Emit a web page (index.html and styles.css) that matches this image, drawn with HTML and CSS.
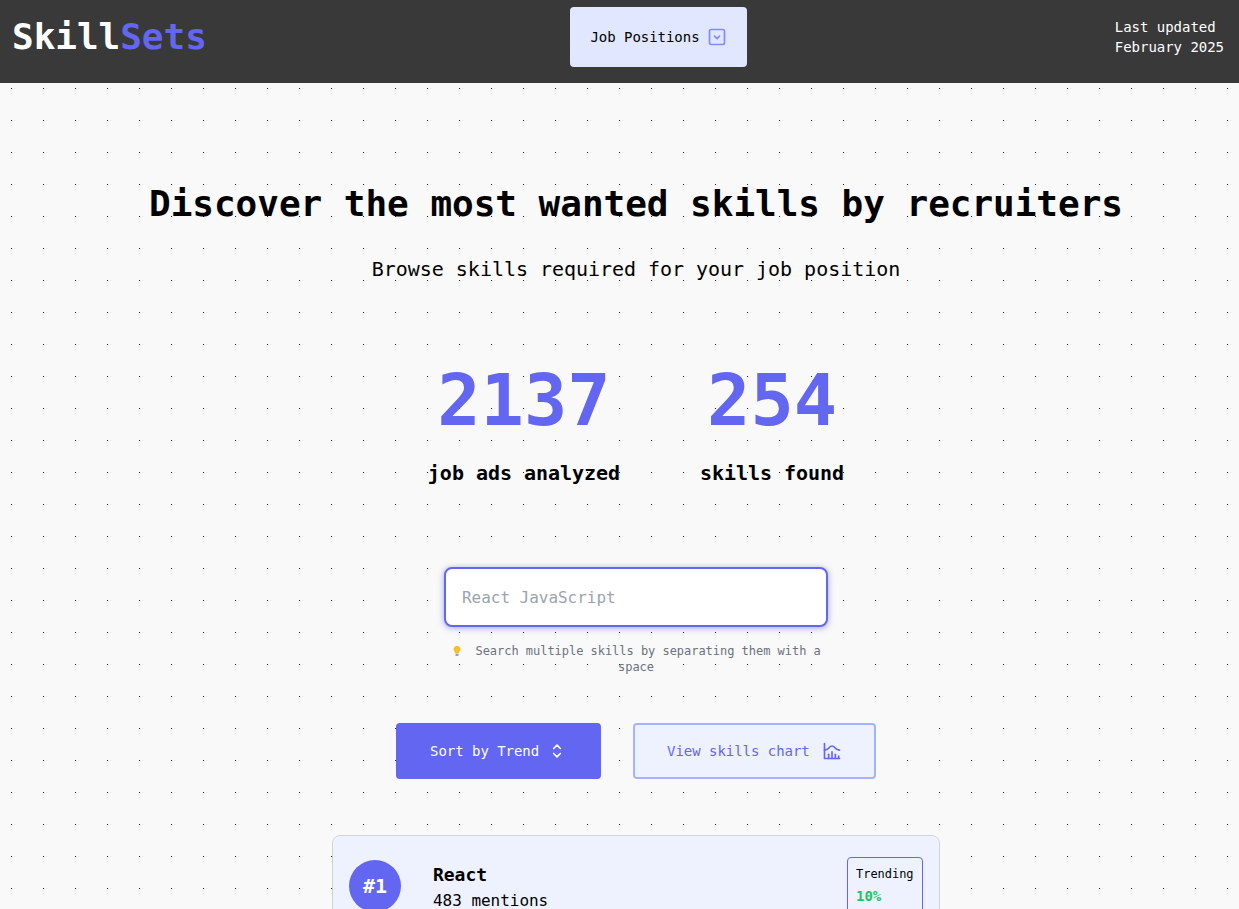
FILE: index.html
```html
<!DOCTYPE html>
<html lang="en">
<head>
    <meta charset="UTF-8">
    <title>SkillSets</title>
    <link rel="stylesheet" href="styles.css">
</head>
<body>
    <header class="topbar">
        <div class="logo">Skill<span class="logo-accent">Sets</span></div>
        <button type="button" class="job-select">
            Job Positions
            <svg class="icon icon-select" viewBox="0 0 24 24"><path d="M3 5a2 2 0 0 1 2 -2h14a2 2 0 0 1 2 2v14a2 2 0 0 1 -2 2h-14a2 2 0 0 1 -2 -2z"/><path d="M9 11l3 3l3 -3"/></svg>
        </button>
        <div class="updated">Last updated<br>February 2025</div>
    </header>

    <main class="content">
        <h1 class="title">Discover the most wanted skills by recruiters</h1>
        <p class="subtitle">Browse skills required for your job position</p>

        <div class="stats">
            <div class="stat">
                <div class="stat-number">2137</div>
                <div class="stat-label">job ads analyzed</div>
            </div>
            <div class="stat">
                <div class="stat-number">254</div>
                <div class="stat-label">skills found</div>
            </div>
        </div>

        <input type="text" class="search" placeholder="React JavaScript">
        <p class="hint">
            <svg class="bulb" viewBox="0 0 12 12"><path class="bulb-glass" d="M6 .8a3.6 3.6 0 0 0-2.2 6.4c.5.4.7.9.7 1.4h3c0-.5.2-1 .7-1.4A3.6 3.6 0 0 0 6 .8z"/><rect class="bulb-base" x="4.5" y="8.8" width="3" height="2.2" rx=".6"/></svg>
            Search multiple skills by separating them with a space
        </p>

        <div class="actions">
            <button type="button" class="btn btn-sort">
                Sort by Trend
                <svg class="icon" viewBox="0 0 24 24"><path d="M8 9l4 -4l4 4"/><path d="M16 15l-4 4l-4 -4"/></svg>
            </button>
            <button type="button" class="btn btn-chart">
                View skills chart
                <svg class="icon" viewBox="0 0 24 24"><path d="M3 3v18h18"/><path d="M20 18v3"/><path d="M16 16v5"/><path d="M12 13v8"/><path d="M8 16v5"/><path d="M3 11c6 0 5 -5 9 -5s3 5 9 5"/></svg>
            </button>
        </div>

        <div class="skill-card">
            <div class="rank">#1</div>
            <div class="skill-info">
                <div class="skill-name">React</div>
                <div class="skill-count">483 mentions</div>
            </div>
            <div class="trend">
                <div class="trend-label">Trending</div>
                <div class="trend-value">10%</div>
            </div>
        </div>
    </main>
</body>
</html>
```

FILE: styles.css
```css
html, body {
    height: 100%;
    overflow: hidden;
}
body {
    margin: 0;
    font-family: "DejaVu Sans Mono", monospace;
    letter-spacing: -0.002em;
    color: #000000;
    background-color: #f9f9f9;
    background-image: radial-gradient(circle at 16.5px 16.5px, #222222 0.7px, transparent 0.71px);
    background-size: 32px 32px;
    background-position: -5px 8px;
}
button {
    font-family: inherit;
    letter-spacing: inherit;
    white-space: nowrap;
    border: none;
    cursor: pointer;
}
.icon {
    width: 20px;
    height: 20px;
    fill: none;
    stroke: currentColor;
    stroke-width: 2;
    stroke-linecap: round;
    stroke-linejoin: round;
    flex-shrink: 0;
}

/* top bar */
.topbar {
    display: flex;
    justify-content: space-between;
    align-items: center;
    height: 60px;
    padding: 7px 15px 16px 12px;
    background: #393939;
    color: #ffffff;
}
.logo {
    width: 191px;
    font-size: 36px;
    font-weight: 700;
    line-height: 40px;
}
.logo-accent {
    color: #6366f1;
}
.job-select {
    display: flex;
    align-items: center;
    gap: 7px;
    width: 177px;
    height: 60px;
    padding: 0 20px;
    font-size: 14px;
    color: #000000;
    background: #e0e7ff;
    border-radius: 4px;
}
.icon-select {
    color: #818cf8;
}
.updated {
    font-size: 14px;
    line-height: 20px;
}

/* main column */
.content {
    display: flex;
    flex-direction: column;
    align-items: center;
    margin-left: 33px;
    padding-top: 101px;
}
.title {
    margin: 0;
    font-size: 36px;
    font-weight: 700;
    line-height: 40px;
    white-space: nowrap;
}
.subtitle {
    margin: 31px 0 0;
    font-size: 20px;
    line-height: 28px;
}
.stats {
    display: flex;
    gap: 80px;
    margin-top: 81px;
}
.stat {
    display: flex;
    flex-direction: column;
    align-items: center;
}
.stat-number {
    font-size: 72px;
    font-weight: 700;
    line-height: 72px;
    color: #6366f1;
}
.stat-label {
    margin-top: 23px;
    font-size: 20px;
    font-weight: 700;
    line-height: 28px;
}
.search {
    box-sizing: border-box;
    width: 384px;
    height: 60px;
    margin-top: 80px;
    padding: 0 16px;
    font-family: inherit;
    font-size: 16px;
    letter-spacing: inherit;
    background: #ffffff;
    border: 2px solid #6366f1;
    border-radius: 8px;
    box-shadow: 0 1px 6px rgba(99, 102, 241, 0.6);
    outline: none;
}
.search::placeholder {
    color: #9ca3af;
}
.hint {
    width: 384px;
    margin: 16px 0 0;
    font-size: 12px;
    line-height: 16px;
    text-align: center;
    color: #6b7280;
}
.bulb {
    width: 12px;
    height: 12px;
    margin-right: 5px;
    vertical-align: -2px;
}
.bulb-glass {
    fill: #fbbf24;
}
.bulb-base {
    fill: #9ca3af;
}
.actions {
    display: flex;
    gap: 32px;
    margin-top: 48px;
}
.btn {
    display: flex;
    align-items: center;
    box-sizing: border-box;
    height: 56px;
    font-size: 14px;
    border-radius: 4px;
}
.btn-sort {
    gap: 8px;
    width: 205px;
    padding: 0 34px;
    color: #ffffff;
    background: #6366f1;
}
.btn-chart {
    gap: 12px;
    width: 243px;
    padding: 0 32px;
    color: #6366f1;
    background: #eef2ff;
    border: 2px solid #a5b4fc;
}

/* skill list */
.skill-card {
    display: flex;
    align-items: center;
    box-sizing: border-box;
    width: 608px;
    height: 102px;
    margin-top: 56px;
    padding: 0 16px;
    background: #eef2ff;
    border: 1px solid #d1d5db;
    border-radius: 8px;
}
.rank {
    display: flex;
    align-items: center;
    justify-content: center;
    width: 52px;
    height: 52px;
    font-size: 20px;
    font-weight: 700;
    color: #ffffff;
    background: #6366f1;
    border-radius: 50%;
}
.skill-info {
    flex: 1;
    margin-top: 2px;
    margin-left: 32px;
}
.skill-name {
    font-size: 18px;
    font-weight: 700;
    line-height: 28px;
}
.skill-count {
    font-size: 16px;
    line-height: 24px;
}
.trend {
    box-sizing: border-box;
    width: 76px;
    height: 58px;
    padding: 8px;
    border: 1px solid #6366f1;
    border-radius: 4px;
}
.trend-label {
    font-size: 12px;
    line-height: 16px;
}
.trend-value {
    margin-top: 4px;
    font-size: 14px;
    font-weight: 700;
    line-height: 20px;
    color: #22c55e;
}
```
